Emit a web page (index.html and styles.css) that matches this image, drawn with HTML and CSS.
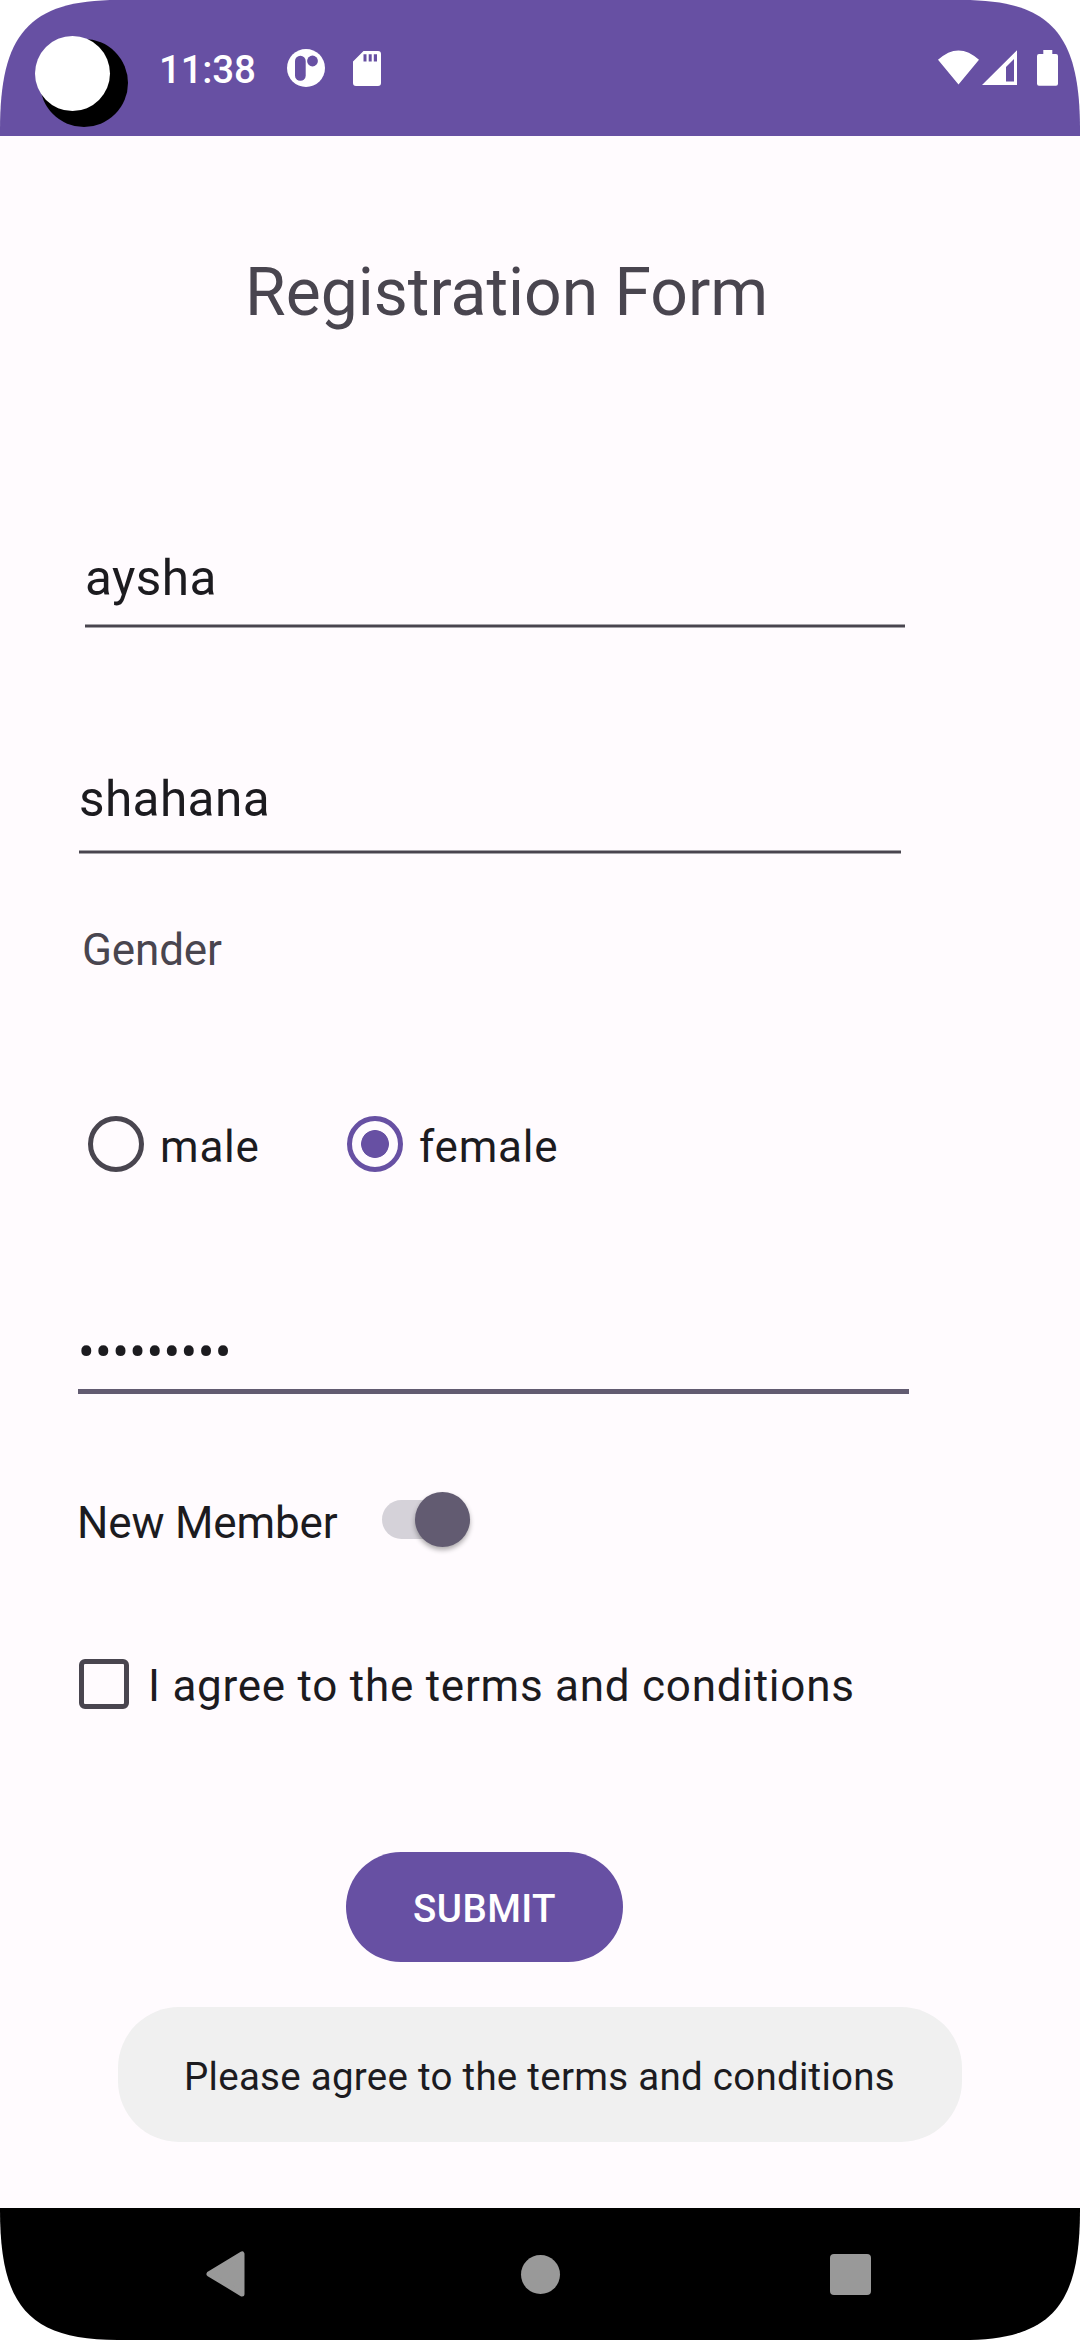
FILE: index.html
```html
<!DOCTYPE html>
<html lang="en">
<head>
<meta charset="utf-8">
<title>Registration Form</title>
<link rel="stylesheet" href="styles.css">
</head>
<body>
<div class="screen">
  <header class="status">
    <svg class="camera" width="94" height="92" viewBox="35 36 94 92"><circle cx="84" cy="83" r="44" fill="#000"/><circle cx="72.5" cy="73.5" r="37.5" fill="#fff"/></svg>
    <span class="clock">11:38</span>
    <svg class="app-icon" width="38" height="38" viewBox="286 49.3 38 38"><circle cx="305" cy="68.3" r="19" fill="#fff"/><rect x="294" y="56" width="10.7" height="25" rx="5.3" fill="#6750a3"/><circle cx="311.5" cy="61.3" r="5.4" fill="#6750a3"/></svg>
    <svg class="sd-icon" width="28" height="35" viewBox="0 0 28 35"><path fill="#fff" fill-rule="evenodd" d="M10.5 0H25a3 3 0 0 1 3 3V32a3 3 0 0 1-3 3H3a3 3 0 0 1-3-3V10.500ZM10.500 3.300V10.500H13.500V3.300ZM15.700 3.300V10.500H18.700V3.300ZM20.800 3.300V10.500H24V3.300Z"/></svg>
    <svg class="system-icons" width="122" height="38" viewBox="937 49 122 38"><path fill="#fff" d="M938 59.800Q958.500 41 979 59.800L958.500 84.500ZM982 85 1017 50.300V85ZM1043.300 50h9v4h3.700a2 2 0 0 1 2 2V83.700a2 2 0 0 1-2 2H1039a2 2 0 0 1-2-2V56a2 2 0 0 1 2-2h4.300Z"/><path fill="#6750a3" d="M1006 67 1014 59V81.500H1006Z"/></svg>
  </header>
  <main class="form">
    <h1 class="title">Registration Form</h1>
    <div class="field first-name"><span>aysha</span><div class="rule"></div></div>
    <div class="field last-name"><span>shahana</span><div class="rule"></div></div>
    <div class="label">Gender</div>
    <div class="radios">
      <div class="radio"><i class="ring"></i><span>male</span></div>
      <div class="radio selected"><i class="ring"></i><span>female</span></div>
    </div>
    <div class="field password"><span>•••••••••</span></div>
    <div class="member"><span>New Member</span><div class="switch"><i class="thumb"></i></div></div>
    <div class="agree"><i class="box"></i><span>I agree to the terms and conditions</span></div>
    <button class="submit">SUBMIT</button>
    <div class="toast"><span>Please agree to the terms and conditions</span></div>
  </main>
  <nav class="navbar">
    <svg class="back" width="40" height="46" viewBox="0 0 40 46"><path d="M3 23 36 3V43Z" fill="#999" stroke="#999" stroke-width="5" stroke-linejoin="round"/></svg>
    <i class="home"></i>
    <i class="recent"></i>
  </nav>
</div>
</body>
</html>
```
FILE: styles.css
```css
* { box-sizing: border-box; }
html { background: #fff; }
body { margin: 0; font-family: Roboto, sans-serif; color: #1c1b1f; }

.screen {
  width: 1080px;
  height: 2340px;
  display: flex;
  flex-direction: column;
  background: #fffbfe;
  clip-path: path("M0 130C0 35 28 0 118 0H962C1052 0 1080 35 1080 130V2210C1080 2305 1052 2340 962 2340H118C28 2340 0 2305 0 2210Z");
}

.status {
  height: 136px;
  flex: none;
  display: flex;
  align-items: flex-start;
  background: #6750a3;
}
.camera { margin: 36px 0 0 35px; }
.clock {
  width: 97px;
  margin: 46px 0 0 30px;
  font-size: 38.5px;
  line-height: 47px;
  letter-spacing: -.2px;
  font-weight: 500;
  color: #fff;
  white-space: nowrap;
}
.app-icon { margin: 49px 0 0 31px; }
.sd-icon { margin: 51px 0 0 28px; }
.system-icons { margin: 49px 21px 0 auto; }

.form {
  flex: 1;
  display: flex;
  flex-direction: column;
  align-items: flex-start;
}
.title {
  margin: 117px 0 0 245px;
  font-size: 66px;
  line-height: 80px;
  font-weight: 400;
  color: #49454f;
  white-space: nowrap;
}
.field { font-size: 49.5px; line-height: 58px; letter-spacing: .4px; }
.field span { display: block; }
.first-name { width: 820px; margin: 216px 0 0 85px; }
.last-name { width: 822px; margin: 142px 0 0 79px; }
.rule {
  height: 4px;
  margin-top: 17px;
  background: linear-gradient(#a4a2a7 1px, #49454f 1px 3px, #a4a2a7 3px);
}
.last-name .rule { margin-top: 22px; }

.label {
  margin: 70px 0 0 82px;
  font-size: 44px;
  line-height: 52px;
  letter-spacing: -.15px;
  color: #49454f;
}

.radios { display: flex; margin: 140px 0 0 88px; }
.radio {
  width: 259px;
  display: flex;
  gap: 16px;
  font-size: 44px;
  line-height: 52px;
  letter-spacing: .8px;
}
.radio span { margin-top: 5px; }
.ring {
  width: 56px;
  height: 56px;
  flex: none;
  border: 5.5px solid #49454f;
  border-radius: 50%;
}
.selected .ring {
  border-color: #6750a3;
  background: radial-gradient(circle, #6750a3 13.5px, transparent 14.3px);
}

.password {
  width: 831px;
  height: 83px;
  margin: 138px 0 0 78px;
  padding-top: 12px;
  border-bottom: 5px solid #625b71;
}

.member {
  display: flex;
  align-items: flex-start;
  margin: 98px 0 0 77px;
  font-size: 44px;
  line-height: 52px;
  letter-spacing: -.15px;
}
.member span { width: 305px; margin-top: 5px; }
.switch {
  width: 88px;
  height: 39px;
  margin-top: 8px;
  border-radius: 20px;
  background: #d5d2d9;
  display: flex;
  align-items: center;
  justify-content: flex-end;
}
.thumb {
  width: 55px;
  height: 55px;
  flex: none;
  border-radius: 50%;
  background: #625b71;
  box-shadow: 0 3px 5px rgba(0, 0, 0, .32);
}

.agree {
  display: flex;
  margin: 110px 0 0 79px;
  font-size: 44px;
  line-height: 52px;
  letter-spacing: .75px;
}
.box {
  width: 50px;
  height: 50px;
  margin-right: 19px;
  border: 5.5px solid #49454f;
  border-radius: 6px;
}
.agree span { margin-top: 1px; white-space: nowrap; }

.submit {
  width: 277px;
  height: 110px;
  margin: 140px 0 0 346px;
  padding: 3px 0 0;
  border: 0;
  border-radius: 55px;
  background: #6750a3;
  color: #fff;
  font: 500 38.5px/46px Roboto, sans-serif;
  letter-spacing: .45px;
}

.toast {
  width: 844px;
  height: 135px;
  margin: 45px 0 0 118px;
  padding: 46px 0 0 66px;
  border-radius: 61px;
  background: #f0f0f0;
  font-size: 38.5px;
  line-height: 47px;
  letter-spacing: .27px;
  white-space: nowrap;
}

.navbar {
  height: 132px;
  flex: none;
  display: flex;
  align-items: center;
  background: #000;
}
.back { margin-left: 206px; }
.home { width: 39px; height: 39px; margin-left: 275px; border-radius: 50%; background: #999; }
.recent { width: 41px; height: 41px; margin-left: 270px; border-radius: 4px; background: #999; }
```
